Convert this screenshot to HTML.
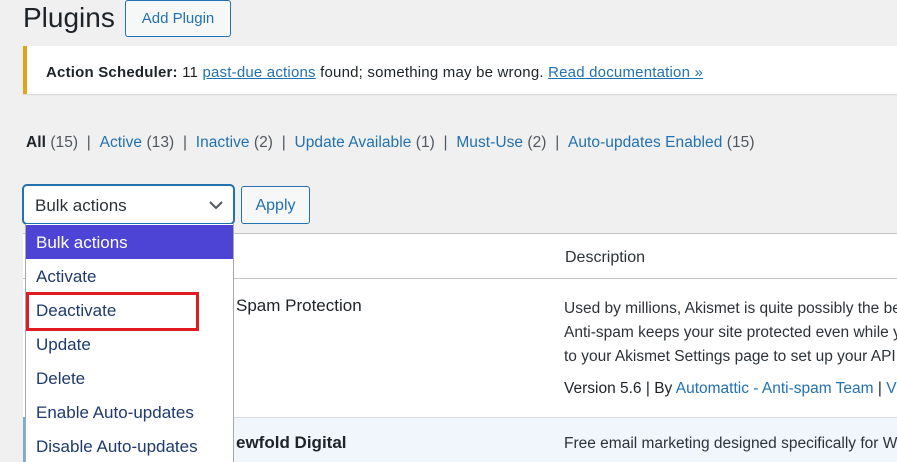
<!DOCTYPE html>
<html><head><style>
html,body{margin:0;width:897px;height:462px;overflow:hidden}
body{background:#f0f0f1;font-family:"Liberation Sans",sans-serif;color:#1d2327;position:relative}
.a{position:absolute;white-space:nowrap}
.lk{color:#2271b1}
</style></head><body>
<div class="a" style="left:23px;top:0;font-size:28px;line-height:36px;color:#1d2327">Plugins</div>
<div class="a" style="left:125px;top:0;width:104px;height:35px;border:1px solid #2271b1;border-radius:3px;background:#f6f7f7;color:#2271b1;font-size:15px;line-height:35px;text-align:center">Add Plugin</div>
<div class="a" style="left:23px;top:46px;width:874px;height:48px;background:#fff;border-left:4px solid #dba617;box-shadow:0 1px 1px rgba(0,0,0,.1)"></div>
<div class="a" style="left:46px;top:63px;font-size:15px;line-height:20px;letter-spacing:0.2px"><b>Action Scheduler:</b> 11 <u class="lk">past-due actions</u> found; something may be wrong. <u class="lk">Read documentation »</u></div>
<div class="a" style="left:26px;top:133px;font-size:15.5px;line-height:20px;color:#50575e;letter-spacing:0.05px"><b style="color:#1d2327">All</b> (15) &nbsp;| &nbsp;<span class="lk">Active</span> (13) &nbsp;| &nbsp;<span class="lk">Inactive</span> (2) &nbsp;| &nbsp;<span class="lk">Update Available</span> (1) &nbsp;| &nbsp;<span class="lk">Must-Use</span> (2) &nbsp;| &nbsp;<span class="lk">Auto-updates Enabled</span> (15)</div>
<div class="a" style="left:23px;top:185px;width:209px;height:37px;border:1px solid #2271b1;border-radius:4px;background:#fff;box-shadow:0 0 0 1px #2271b1"></div>
<div class="a" style="left:35px;top:196px;font-size:17px;line-height:20px;color:#2c3338">Bulk actions</div>
<svg class="a" style="left:208px;top:199px" width="16" height="12"><path d="M2 3l6 6 6-6" stroke="#50575e" stroke-width="2" fill="none"/></svg>
<div class="a" style="left:241px;top:186px;width:67px;height:36px;border:1px solid #2271b1;border-radius:3px;background:#f6f7f7;color:#2271b1;font-size:16px;line-height:38px;text-align:center">Apply</div>
<div class="a" style="left:23px;top:233px;width:874px;height:229px;background:#fff;border-top:1px solid #c3c4c7"></div>
<div class="a" style="left:23px;top:278px;width:874px;height:1px;background:#c3c4c7"></div>
<div class="a" style="left:23px;top:417px;width:874px;height:45px;background:#f0f6fc;border-top:1px solid #dcdcde"></div>
<div class="a" style="left:23px;top:417px;width:3px;height:45px;background:#72aee6"></div>
<div class="a" style="left:565px;top:248px;font-size:16px;line-height:20px;color:#2c3338">Description</div>
<div class="a" style="left:236px;top:296px;font-size:17px;line-height:20px;color:#1d2327">Spam Protection</div>
<div class="a" style="left:564px;top:297px;font-size:15.5px;line-height:24px;color:#2c3338">Used by millions, Akismet is quite possibly the best way<br>Anti-spam keeps your site protected even while you<br>to your Akismet Settings page to set up your API key.</div>
<div class="a" style="left:564px;top:379px;font-size:15.5px;line-height:20px;color:#1d2327">Version 5.6 | By <span class="lk">Automattic - Anti-spam Team</span> | <span class="lk">View</span></div>
<div class="a" style="left:236px;top:433px;font-size:17px;line-height:20px;font-weight:bold">ewfold Digital</div>
<div class="a" style="left:564px;top:434px;font-size:15.5px;line-height:20px;color:#2c3338">Free email marketing designed specifically for WordPress.</div>
<div class="a" style="left:25px;top:224px;width:207px;height:238px;background:#fff;border-left:1px solid #a7aaad;border-right:1px solid #a7aaad"></div>
<div class="a" style="left:26px;top:225px;width:207px;height:34px;background:#4d44d6"></div>
<div class="a" style="left:36px;font-size:17px;line-height:34px;top:226px;color:#fff">Bulk actions</div>
<div class="a" style="left:36px;font-size:17px;line-height:34px;top:260px;color:#1e3a6e">Activate</div>
<div class="a" style="left:36px;font-size:17px;line-height:34px;top:294px;color:#1e3a6e">Deactivate</div>
<div class="a" style="left:36px;font-size:17px;line-height:34px;top:328px;color:#1e3a6e">Update</div>
<div class="a" style="left:36px;font-size:17px;line-height:34px;top:362px;color:#1e3a6e">Delete</div>
<div class="a" style="left:36px;font-size:17px;line-height:34px;top:396px;color:#1e3a6e">Enable Auto-updates</div>
<div class="a" style="left:36px;font-size:17px;line-height:34px;top:430px;color:#1e3a6e">Disable Auto-updates</div>
<div class="a" style="left:26px;top:292px;width:167px;height:33px;border:3px solid #e01b22"></div>
</body></html>
